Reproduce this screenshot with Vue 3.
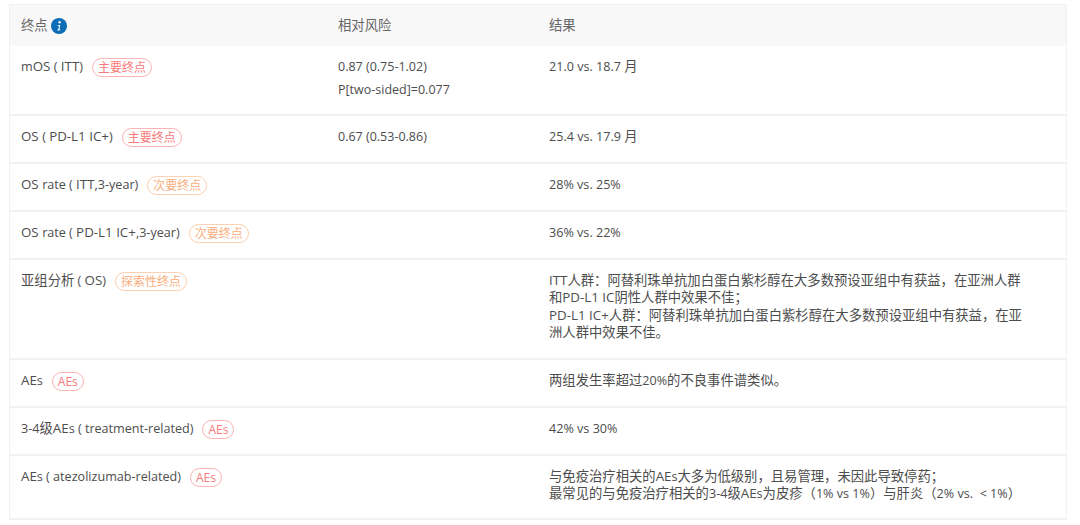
<script setup>
const rows = [
  { name: 'mOS ( ITT)', tag: '主要终点', tone: 'red', risk: ['0.87 (0.75-1.02)', 'P[two-sided]=0.077'], result: ['21.0 vs. 18.7 月'], h: 70 },
  { name: 'OS ( PD-L1 IC+)', tag: '主要终点', tone: 'red', risk: ['0.67 (0.53-0.86)'], result: ['25.4 vs. 17.9 月'], h: 48 },
  { name: 'OS rate ( ITT,3-year)', tag: '次要终点', tone: 'orange', risk: [], result: ['28% vs. 25%'], h: 48 },
  { name: 'OS rate ( PD-L1 IC+,3-year)', tag: '次要终点', tone: 'orange', risk: [], result: ['36% vs. 22%'], h: 48 },
  { name: '亚组分析 ( OS)', tag: '探索性终点', tone: 'orange', risk: [], result: ['ITT人群：阿替利珠单抗加白蛋白紫杉醇在大多数预设亚组中有获益，在亚洲人群', '和PD-L1 IC阴性人群中效果不佳；', 'PD-L1 IC+人群：阿替利珠单抗加白蛋白紫杉醇在大多数预设亚组中有获益，在亚', '洲人群中效果不佳。'], h: 100 },
  { name: 'AEs', tag: 'AEs', tone: 'red', risk: [], result: ['两组发生率超过20%的不良事件谱类似。'], h: 48 },
  { name: '3-4级AEs ( treatment-related)', tag: 'AEs', tone: 'red', risk: [], result: ['42% vs 30%'], h: 48 },
  { name: 'AEs ( atezolizumab-related)', tag: 'AEs', tone: 'red', risk: [], result: ['与免疫治疗相关的AEs大多为低级别，且易管理，未因此导致停药；', '最常见的与免疫治疗相关的3-4级AEs为皮疹（1% vs 1%）与肝炎（2% vs.\u00a0 < 1%）'], h: 64 },
]
// CJK and capitals keep the base size; other Latin runs are set slightly smaller
const segments = (text) =>
  text
    .match(/[A-Z][A-Z0-9 +-]*|[\x00-\x7f\u00a0]+?(?=[A-Z]|[^\x00-\x7f\u00a0]|$)|[^\x00-\x7f\u00a0]+/g)
    .map((t) => ({ t, kind: /^[A-Z]/.test(t) ? 'cap' : /^[\x00-\x7f\u00a0]/.test(t) ? 'latin' : 'cjk' }))
</script>

<template>
  <div class="page">
    <div class="table">
      <div class="row head">
        <div class="cell first">
          <span>终点</span>
          <svg class="info" viewBox="0 0 16 16" width="16" height="16" aria-hidden="true">
            <circle cx="8" cy="8" r="8" fill="#0b6cb8" />
            <circle cx="8.6" cy="4.3" r="1.2" fill="#fff" />
            <path d="M6.6 6.9h2.8l-1.1 4.6h1.1l-.2.9H6.3l.2-.9h.7l.8-3.7h-1.6z" fill="#fff" />
          </svg>
        </div>
        <div class="cell">相对风险</div>
        <div class="cell">结果</div>
      </div>
      <div v-for="r in rows" :key="r.name" class="row" :style="{ height: r.h + 'px' }">
        <div class="cell first">
          <span><span v-for="(s, i) in segments(r.name)" :key="i" :class="s.kind">{{ s.t }}</span></span>
          <span class="tag" :class="r.tone">{{ r.tag }}</span>
        </div>
        <div class="cell stack">
          <div v-for="l in r.risk" :key="l">{{ l }}</div>
        </div>
        <div class="cell result">
          <div v-for="l in r.result" :key="l"><span v-for="(s, i) in segments(l)" :key="i" :class="s.kind">{{ s.t }}</span></div>
        </div>
      </div>
    </div>
  </div>
</template>

<style>
html, body { margin: 0; background: #fff; }
</style>

<style scoped>
.page {
  width: 1080px;
  height: 525px;
  padding: 4px 0 0 9px;
  box-sizing: border-box;
  overflow: hidden;
  background: #fff;
  font-family: "Open Sans", "Noto Sans CJK SC", sans-serif;
  font-size: 13.33px;
  color: #4d4d4d;
}
.table {
  width: 1058px;
  border: 1px solid #f1f1f1;
  border-bottom: 0;
  box-sizing: border-box;
}
.row {
  display: grid;
  grid-template-columns: 328px 211px 1fr;
  box-sizing: border-box;
  border-bottom: 2px solid #f2f2f2;
}
.head {
  height: 41px;
  background: #f8f8f8;
  border-bottom: 0;
  align-items: center;
  color: #666;
}
.cell {
  padding-top: 12px;
  line-height: 17px;
}
.head .cell { padding-top: 0; }
.first {
  display: flex;
  align-items: flex-start;
  padding-left: 11px;
  gap: 9px;
}
.head .first { align-items: center; gap: 3px; }
.info { display: block; }
.stack { font-size: 12.5px; }
.stack div { height: 23px; line-height: 17px; }
.result { white-space: nowrap; line-height: 17.4px; }
.latin { font-size: 12.6px; }
.tag {
  display: inline-block;
  box-sizing: border-box;
  height: 19px;
  line-height: 17px;
  padding: 0 5px;
  border: 1px solid;
  border-radius: 10px;
  font-size: 12px;
}
.red { color: #f87a7a; border-color: #fbb4b4; }
.orange { color: #f8ae7c; border-color: #fcd0b0; }
</style>
